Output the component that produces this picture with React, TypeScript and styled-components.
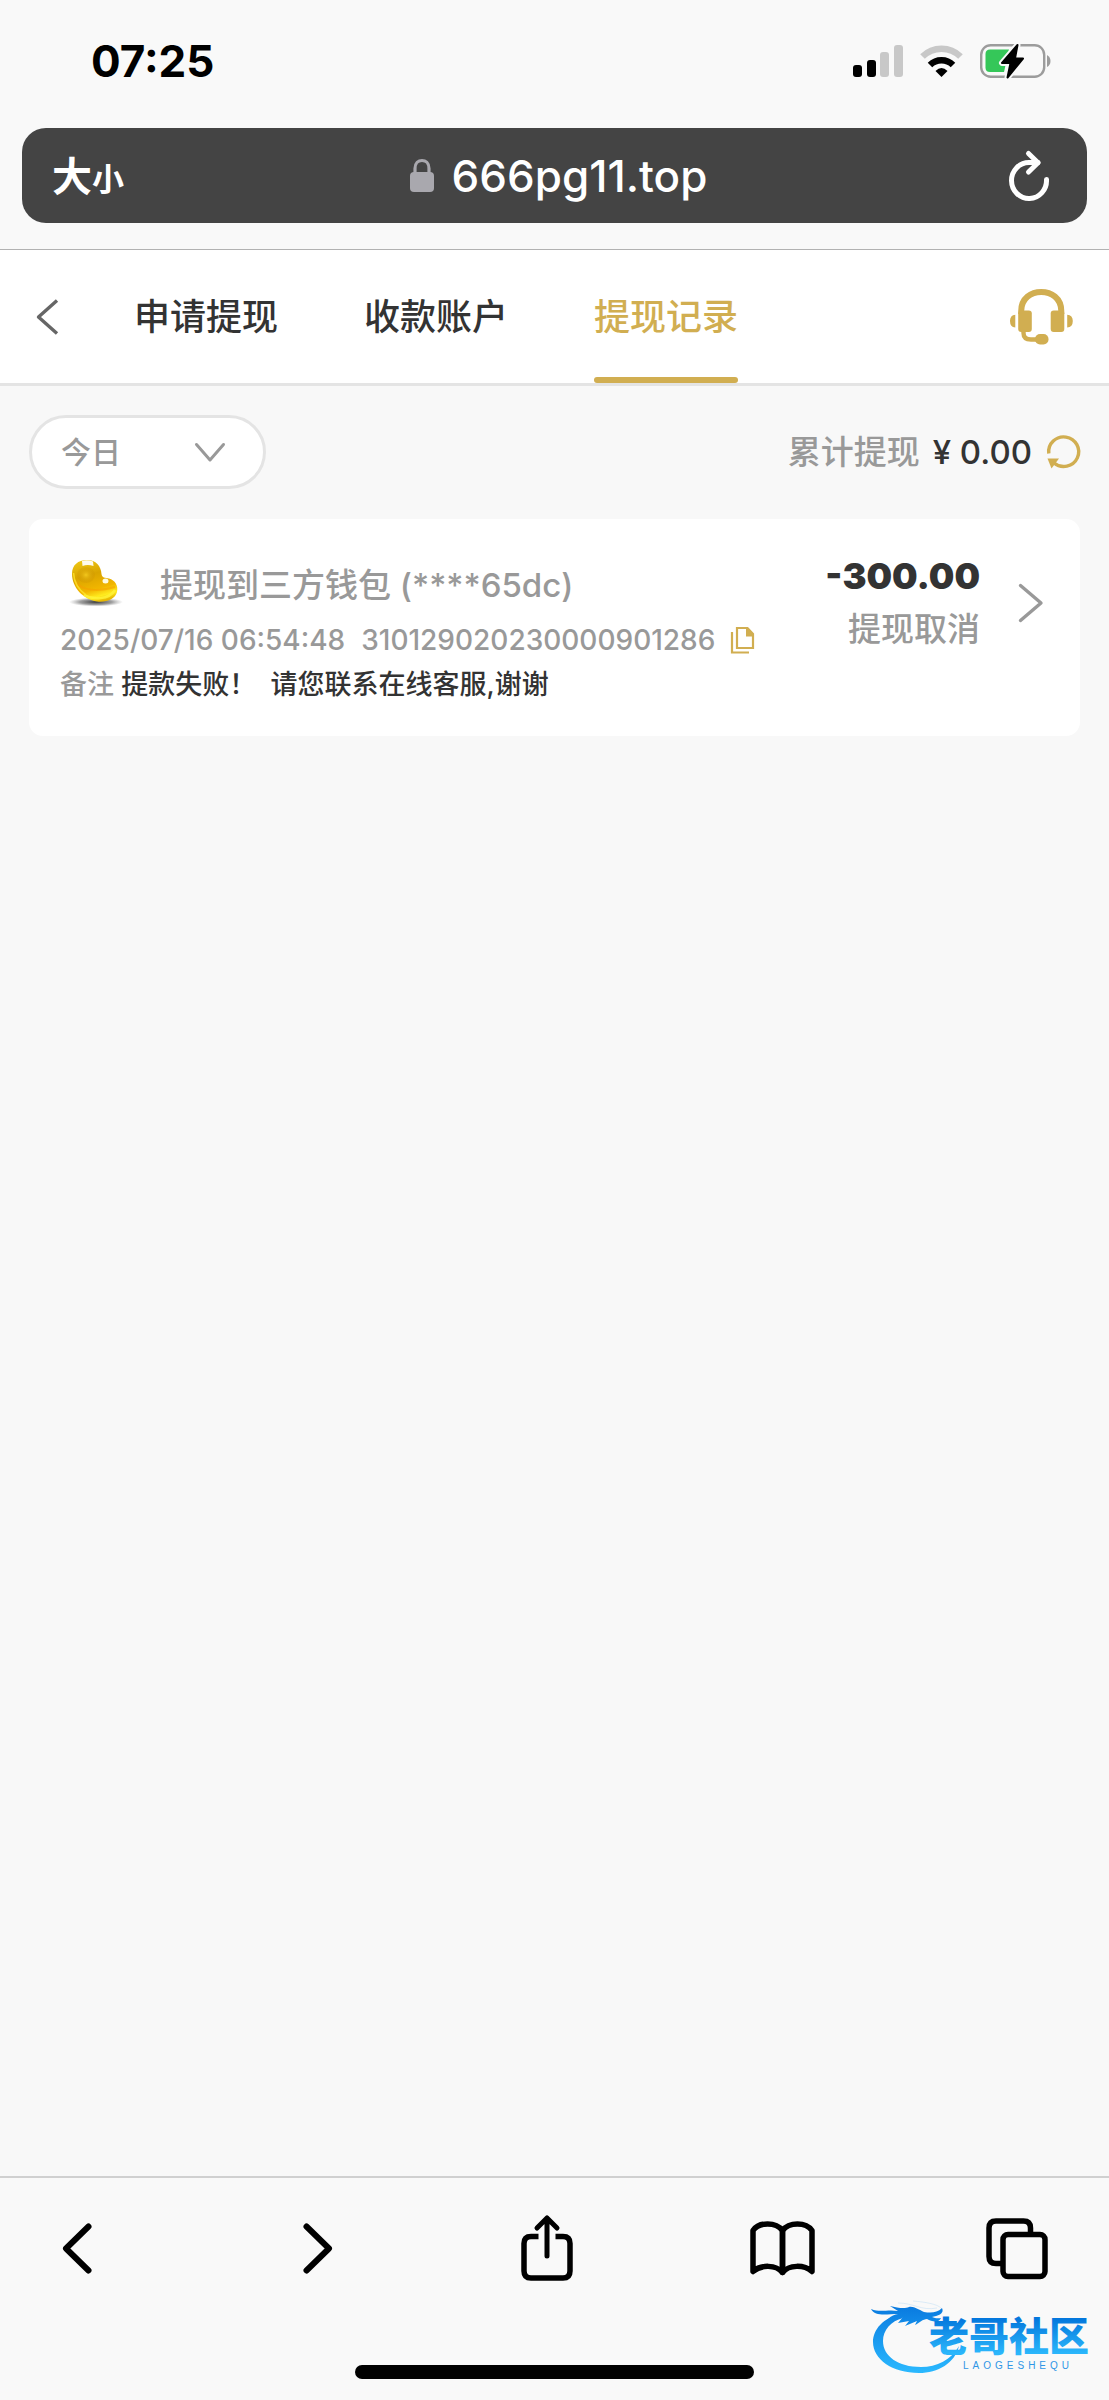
import React from "react";
import styled, { createGlobalStyle } from "styled-components";

const gold = "#d1ae51";
const muted = "#999999";
const ink = "#333333";
const line = "#e4e4e4";

const GlobalStyle = createGlobalStyle`
  * { box-sizing: border-box; }
  body {
    margin: 0;
    background: #f8f8f8;
    color: ${ink};
    font-family: Inter, "Noto Sans CJK SC", sans-serif;
  }
  button, select {
    margin: 0;
    padding: 0;
    border: 0;
    background: none;
    color: inherit;
    font: inherit;
    cursor: pointer;
  }
  svg { display: block; flex: none; overflow: visible; }
`;

const Screen = styled.div`
  display: flex;
  flex-direction: column;
  min-height: 100vh;
`;

const BrowserTop = styled.header`
  padding: 0 22px 26px;
  background: #f9f9f9;
  border-bottom: 1px solid #b2b2b2;
`;

const StatusBar = styled.div`
  display: flex;
  align-items: center;
  justify-content: space-between;
  height: 128px;
  padding: 0 36px 6px 69px;
`;

const Clock = styled.time`
  color: #000;
  font-size: 44px;
  font-weight: 700;
  line-height: 48px;
`;

const StatusIcons = styled.div`
  display: flex;
  align-items: center;
  gap: 17px;
`;

const AddressBar = styled.div`
  display: grid;
  grid-template-columns: 1fr auto 1fr;
  align-items: center;
  height: 95px;
  padding: 0 38px 0 30px;
  border-radius: 24px;
  background: #444;
  color: #fff;
`;

const TextSizeButton = styled.button`
  display: flex;
  align-items: baseline;
  padding-top: 6px;
  font-size: 40px;
  font-weight: 700;
  line-height: 48px;
`;

const SmallGlyph = styled.span`
  font-size: 32px;
`;

const Address = styled.div`
  display: flex;
  align-items: center;
  gap: 18px;
  padding-left: 16px;
  font-size: 44px;
  font-weight: 500;
  line-height: 48px;
`;

const ReloadButton = styled.button`
  justify-self: end;
`;

const NavBar = styled.nav`
  display: flex;
  align-items: stretch;
  height: 136px;
  padding: 0 36px;
  background: #fff;
  border-bottom: 3px solid ${line};
`;

const NavButton = styled.button`
  display: flex;
  align-items: center;
`;

const Tabs = styled.div`
  display: flex;
  flex: 1;
  gap: 86px;
  padding-left: 76px;
`;

const Tab = styled.a<{ $active?: boolean }>`
  display: flex;
  align-items: center;
  padding-top: 6px;
  border-bottom: 6px solid transparent;
  position: relative;
  color: ${(p) => (p.$active ? gold : ink)};
  font-size: 36px;
  font-weight: 500;
  line-height: 48px;
  text-decoration: none;
  &::after {
    content: "";
    position: absolute;
    left: 0;
    right: 0;
    bottom: -6px;
    height: 6px;
    border-radius: 3px;
    background: ${(p) => (p.$active ? gold : "transparent")};
  }
`;

const Main = styled.main`
  flex: 1;
  padding: 29px;
`;

const FilterRow = styled.div`
  display: flex;
  align-items: center;
  justify-content: space-between;
  margin-bottom: 30px;
`;

const DatePicker = styled.label`
  display: grid;
  align-items: center;
  width: 237px;
  height: 74px;
  border: 3px solid ${line};
  border-radius: 37px;
  background: #fff;
  color: ${muted};
  & > * { grid-area: 1 / 1; }
  & > svg {
    justify-self: end;
    margin-right: 38px;
    pointer-events: none;
  }
`;

const DateSelect = styled.select`
  width: 100%;
  height: 100%;
  padding-left: 29px;
  border-radius: 37px;
  appearance: none;
  font-size: 30px;
  font-weight: 500;
`;

const Total = styled.div`
  display: flex;
  align-items: center;
  color: ${muted};
  font-size: 33px;
  font-weight: 500;
  line-height: 48px;
`;

const TotalValue = styled.span`
  margin: 0 15px 0 13px;
  color: ${ink};
`;

const Record = styled.article`
  display: flex;
  align-items: flex-start;
  gap: 39px;
  padding: 35px 37px 33px 31px;
  border-radius: 14px;
  background: #fff;
`;

const RecordBody = styled.div`
  flex: 1;
`;

const RecordTitle = styled.h2`
  display: flex;
  align-items: center;
  gap: 36px;
  height: 58px;
  margin: 0 0 10px;
  padding-left: 10px;
  color: ${muted};
  font-size: 33px;
  font-weight: 500;
`;

const RecordMeta = styled.div`
  display: flex;
  align-items: center;
  gap: 16px;
  color: ${muted};
  font-size: 28px;
  font-weight: 500;
  line-height: 36px;
`;

const RecordNote = styled.p`
  margin: 9px 0 0;
  color: ${muted};
  font-size: 27px;
  font-weight: 500;
  line-height: 36px;
`;

const NoteText = styled.span`
  color: ${ink};
  white-space: pre;
`;

const Outcome = styled.div`
  display: flex;
  flex-direction: column;
  gap: 9px;
  text-align: right;
  line-height: 44px;
`;

const Amount = styled.strong`
  font-size: 36px;
  font-weight: 900;
`;

const OutcomeLabel = styled.span`
  color: ${muted};
  font-size: 33px;
  font-weight: 500;
`;

const DetailButton = styled.button`
  display: flex;
  align-items: center;
  height: 97px;
`;

const BrowserBottom = styled.footer`
  position: relative;
  padding: 36px 0 21px;
  background: #f9f9f9;
  border-top: 2px solid #d0d0d0;
  color: #000;
`;

const Toolbar = styled.div`
  display: flex;
  align-items: center;
  justify-content: space-between;
  height: 68px;
  padding: 0 59px 0 44px;
`;

const ToolButton = styled.button`
  display: flex;
  align-items: center;
  justify-content: center;
  width: 66px;
  height: 68px;
`;

const HomeIndicator = styled.div`
  width: 36%;
  height: 14px;
  margin: 83px auto 0;
  border-radius: 7px;
  background: #000;
`;

const Watermark = styled.div`
  position: absolute;
  right: 16px;
  bottom: 26px;
`;

const stroke = (width: number) => ({
  fill: "none",
  stroke: "currentColor",
  strokeWidth: width,
  strokeLinecap: "round" as const,
  strokeLinejoin: "round" as const,
});

const Signal = () => (
  <svg width="50" height="32" viewBox="0 0 50 32">
    <rect x="0" y="20" width="9" height="12" rx="3" />
    <rect x="14" y="15" width="9" height="17" rx="3" />
    <rect x="27" y="7" width="9" height="25" rx="3" fill="#c8c8c8" />
    <rect x="41" y="0" width="9" height="32" rx="3" fill="#c8c8c8" />
  </svg>
);

const Wifi = () => (
  <svg width="43" height="32" viewBox="0 0 43 32" fill="none">
    <path d="M2.500 11.500A27 27 0 0 1 40.500 11.500" stroke="#c8c8c8" strokeWidth="6.500" />
    <path d="M10 20A16.500 16.500 0 0 1 33 20" stroke="#000" strokeWidth="6.500" />
    <path d="M15.500 26Q21.500 20 27.500 26L21.500 32Z" fill="#000" />
  </svg>
);

const Battery = () => (
  <svg width="71" height="34" viewBox="0 0 71 34">
    <rect x="1.200" y="1.200" width="63" height="31.600" rx="9.500" fill="none" stroke="#9c9c9c" strokeWidth="2.400" />
    <path d="M10 5.500H29L24 28H10Q5.500 28 5.500 23.500V10Q5.500 5.500 10 5.500Z" fill="#35c759" />
    <path d="M67 11Q70.500 13 70.500 17T67 23Z" fill="#9c9c9c" />
    <path d="M37.500 1L22 19H30.500L27.500 33.500L43 14.500H35Z" fill="#000" stroke="#f9f9f9" strokeWidth="6" strokeLinejoin="round" />
    <path d="M37.500 1L22 19H30.500L27.500 33.500L43 14.500H35Z" fill="#000" stroke="#000" strokeWidth="2" strokeLinejoin="round" />
  </svg>
);

const Lock = () => (
  <svg width="24" height="33" viewBox="0 0 24 33">
    <rect y="13" width="24" height="20" rx="4" fill="#a9a8ae" />
    <path d="M5 14V9.500C5 -1.200 19 -1.200 19 9.500V14" fill="none" stroke="#a9a8ae" strokeWidth="3.200" />
  </svg>
);

const Reload = () => (
  <svg width="40" height="49" viewBox="0 0 40 49" {...stroke(5)}>
    <path d="M37.500 28.500A17.500 18 0 1 1 20 11.500H29" />
    <path d="M19.500 2.500L29 11.800L19.500 21" />
  </svg>
);

const NavBack = () => (
  <svg width="22" height="36" viewBox="0 0 22 36" fill="none" stroke="#666" strokeWidth="3.400" strokeLinejoin="round">
    <path d="M21 1.500L2.500 18L21 34.500" />
  </svg>
);

const Headset = () => (
  <svg width="63" height="56" viewBox="0 0 63 56" fill={gold}>
    <path d="M11.200 25V22C11.200 -3.500 51.300 -3.500 51.300 22V25" fill="none" stroke={gold} strokeWidth="6" />
    <rect x="8.200" y="21.500" width="13.600" height="21.500" rx="3" />
    <rect x="40.700" y="21.500" width="13.600" height="21.500" rx="3" />
    <path d="M5.300 25.700V38.500Q0 38 0 32T5.300 25.700ZM57.200 25.700V38.500Q62.800 38 62.800 32T57.200 25.700Z" />
    <path d="M13.500 41V44Q13.500 50.500 21 50.500H29" fill="none" stroke={gold} strokeWidth="4.400" />
    <rect x="25" y="45" width="13.500" height="10.500" rx="5" />
  </svg>
);

const Chevron = () => (
  <svg width="30" height="19" viewBox="0 0 30 19" {...stroke(3)}>
    <path d="M1.500 1.500L15 17L28.500 1.500" />
  </svg>
);

const Refresh = () => (
  <svg width="33" height="33" viewBox="0 0 33 33">
    <path d="M1.800 17.500A15 14.800 0 1 1 7 27" fill="none" stroke={gold} strokeWidth="3.400" />
    <path d="M0.500 22.500H12L4.500 32.500Z" fill={gold} />
  </svg>
);

const Bean = () => (
  <svg width="54" height="50" viewBox="0 0 54 50">
    <defs>
      <radialGradient id="shade">
        <stop offset="0" stopColor="#222" stopOpacity="0.9" />
        <stop offset="0.6" stopColor="#555" stopOpacity="0.55" />
        <stop offset="1" stopColor="#888" stopOpacity="0" />
      </radialGradient>
      <linearGradient id="beanGold" x1="0.300" y1="0" x2="0.600" y2="1">
        <stop offset="0" stopColor="#ecc414" />
        <stop offset="0.350" stopColor="#d9a400" />
        <stop offset="0.700" stopColor="#f2b600" />
        <stop offset="0.880" stopColor="#ffec1f" />
        <stop offset="1" stopColor="#e8b800" />
      </linearGradient>
      <radialGradient id="beanGlow">
        <stop offset="0" stopColor="#f3c81c" />
        <stop offset="1" stopColor="#c98f00" stopOpacity="0.200" />
      </radialGradient>
    </defs>
    <ellipse cx="26" cy="44" rx="27" ry="4.500" fill="url(#shade)" />
    <path d="M2 16C2 7 8 2 17 2C26 2 31 8 31.500 16C32 20 35 19.500 39 20.500C45 22 48.500 28 47 34C45 41 37 44.500 27 43.500C13 41.500 2 29 2 16Z" fill="url(#beanGold)" />
    <ellipse cx="16" cy="17" rx="9" ry="8" fill="url(#beanGlow)" />
    <path d="M5 23C12 33 28 34 45 29" fill="none" stroke="#f59e00" strokeWidth="2" opacity="0.550" />
    <path d="M14 37C23 42 39 42 45 32" fill="none" stroke="#fff43a" strokeWidth="2.500" opacity="0.800" />
    <path d="M3.500 15C4 25 9 32 16 37" fill="none" stroke="#ffe52b" strokeWidth="1.600" opacity="0.800" />
    <path d="M12 3Q17.500 1.500 23 3.500L23.500 8Q17.500 6 12.500 8Z" fill="#fff" opacity="0.930" />
    <ellipse cx="35.500" cy="23" rx="3" ry="2.500" fill="#fffbe0" />
  </svg>
);

const Copy = () => (
  <svg width="23" height="27" viewBox="0 0 23 27" fill="none" stroke={gold} strokeWidth="2.200">
    <path d="M6 1H16.500L22 7V21H6Z" />
    <path d="M15 1H17L22 6.500V9.500H15Z" fill={gold} stroke="none" />
    <path d="M1 5V25.500H18" />
  </svg>
);

const Detail = () => (
  <svg width="24" height="38" viewBox="0 0 24 38" {...stroke(3.4)} stroke={muted}>
    <path d="M1.500 1.500L22 19L1.500 36.500" />
  </svg>
);

const Back = () => (
  <svg width="30" height="51" viewBox="0 0 30 51" {...stroke(6)}>
    <path d="M26.500 3.500L4 25.500L26.500 47.500" />
  </svg>
);

const Forward = () => (
  <svg width="42" height="51" viewBox="-12 0 42 51" {...stroke(6)}>
    <path d="M3.500 3.500L26 25.500L3.500 47.500" />
  </svg>
);

const Share = () => (
  <svg width="52" height="66" viewBox="0 0 52 66" {...stroke(5)}>
    <path d="M26 3V41M16 13L26 3L36 13" />
    <path d="M17.500 21.500H10Q3 21.500 3 28.500V56Q3 63 10 63H42Q49 63 49 56V28.500Q49 21.500 42 21.500H34.500" strokeLinecap="butt" strokeWidth="5.500" />
  </svg>
);

const Book = () => (
  <svg width="65" height="55" viewBox="0 0 65 55" {...stroke(5.5)}>
    <path d="M3 50.500V9.500C9 0.700 26 0.700 32.500 9.500V51.500C26 43.500 11 43.500 3 50.500Z" />
    <path d="M62 50.500V9.500C56 0.700 39 0.700 32.500 9.500V51.500C39 43.500 54 43.500 62 50.500Z" />
  </svg>
);

const Pages = () => (
  <svg width="62" height="61" viewBox="0 0 62 61" {...stroke(5.5)}>
    <rect x="17" y="16.500" width="42" height="42" rx="5" />
    <path d="M17 45.500H10Q3 45.500 3 38.500V10Q3 3 10 3H37.500Q44.500 3 44.500 10V16" strokeLinecap="butt" />
  </svg>
);

const DragonLogo = () => (
  <svg width="222" height="75" viewBox="0 0 222 75">
    <defs>
      <linearGradient id="sky" gradientUnits="userSpaceOnUse" x1="0" y1="8" x2="0" y2="74">
        <stop offset="0" stopColor="#0a7be0" />
        <stop offset="1" stopColor="#2bb9ff" />
      </linearGradient>
      <linearGradient id="letters" gradientUnits="userSpaceOnUse" x1="0" y1="20" x2="0" y2="54">
        <stop offset="0" stopColor="#0478dd" />
        <stop offset="1" stopColor="#2bb6fb" />
      </linearGradient>
    </defs>
    <g fill="url(#sky)">
      <path d="M31 15C12 18 2 31 2 43C2 60 21 74 48 74C67 74 84 64 88 47C80 61 66 68 50 68C27 68 12 57 12 42C12 31 20 22 32 19Z" />
      <path d="M0 10C10 14 16 10 27 12L19 7C27 9 34 10 38 8C43 7 48 11 53 13C60 14 66 14 71 9C74 15 66 17 61 18C65 20 69 19 70 19C68 24 61 23 56 20C52 20 48 24 44 26L46 22L34 27L38 22L27 24L32 18C21 20 16 24 12 29C14 21 20 16 27 15C16 15 4 18 0 10Z" />
    </g>
    <path d="M27 4C43 4 50 12 66 9M42 2C54 3 66 5 70 9" fill="none" stroke="#b9dcf5" strokeWidth="0.800" opacity="0.600" />
    <text x="58" y="52" fontFamily='"Noto Sans CJK SC", sans-serif' fontSize="40" fontWeight="900" fill="url(#letters)">老哥社区</text>
    <text x="92" y="70" fontFamily='"Liberation Sans", sans-serif' fontSize="10" letterSpacing="4" fill="#2f96e6">LAOGESHEQU</text>
  </svg>
);

export default function App() {
  return (
    <Screen>
      <GlobalStyle />
      <BrowserTop>
        <StatusBar>
          <Clock>07:25</Clock>
          <StatusIcons>
            <Signal />
            <Wifi />
            <Battery />
          </StatusIcons>
        </StatusBar>
        <AddressBar>
          <TextSizeButton>
            大<SmallGlyph>小</SmallGlyph>
          </TextSizeButton>
          <Address>
            <Lock />
            <span>666pg11.top</span>
          </Address>
          <ReloadButton aria-label="重新载入">
            <Reload />
          </ReloadButton>
        </AddressBar>
      </BrowserTop>

      <NavBar>
        <NavButton aria-label="返回">
          <NavBack />
        </NavButton>
        <Tabs>
          <Tab href="#apply">申请提现</Tab>
          <Tab href="#accounts">收款账户</Tab>
          <Tab href="#records" $active aria-current="page">提现记录</Tab>
        </Tabs>
        <NavButton aria-label="客服">
          <Headset />
        </NavButton>
      </NavBar>

      <Main>
        <FilterRow>
          <DatePicker>
            <DateSelect aria-label="日期" defaultValue="today">
              <option value="today">今日</option>
            </DateSelect>
            <Chevron />
          </DatePicker>
          <Total>
            累计提现
            <TotalValue>¥ 0.00</TotalValue>
            <button aria-label="刷新">
              <Refresh />
            </button>
          </Total>
        </FilterRow>

        <Record>
          <RecordBody>
            <RecordTitle>
              <Bean />
              <span>提现到三方钱包 (****65dc)</span>
            </RecordTitle>
            <RecordMeta>
              <time>2025/07/16 06:54:48</time>
              <span>310129020230000901286</span>
              <button aria-label="复制">
                <Copy />
              </button>
            </RecordMeta>
            <RecordNote>
              备注 <NoteText>{"提款失败！  请您联系在线客服,谢谢"}</NoteText>
            </RecordNote>
          </RecordBody>
          <Outcome>
            <Amount>-300.00</Amount>
            <OutcomeLabel>提现取消</OutcomeLabel>
          </Outcome>
          <DetailButton aria-label="详情">
            <Detail />
          </DetailButton>
        </Record>
      </Main>

      <BrowserBottom>
        <Toolbar>
          <ToolButton aria-label="后退"><Back /></ToolButton>
          <ToolButton aria-label="前进"><Forward /></ToolButton>
          <ToolButton aria-label="共享"><Share /></ToolButton>
          <ToolButton aria-label="书签"><Book /></ToolButton>
          <ToolButton aria-label="标签页"><Pages /></ToolButton>
        </Toolbar>
        <HomeIndicator />
        <Watermark>
          <DragonLogo />
        </Watermark>
      </BrowserBottom>
    </Screen>
  );
}
